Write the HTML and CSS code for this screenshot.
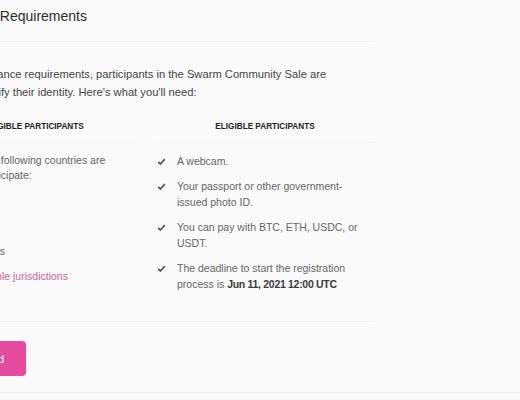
FILE: index.html
```html
<!DOCTYPE html>
<html lang="en">
<head>
<meta charset="utf-8">
<title>Compliance Requirements</title>
<link rel="stylesheet" href="styles.css">
</head>
<body>
<main class="card">
  <header class="card-head">
    <h2 class="title">Compliance Requirements</h2>
  </header>
  <p class="intro">To meet compliance requirements, participants in the Swarm Community Sale are expected to verify their identity. Here's what you'll need:</p>
  <section class="columns">
    <div class="col">
      <h3 class="col-title">Ineligible Participants</h3>
      <div class="col-body">
        <p class="note">Residents of the following countries are forbidden to participate:</p>
        <ul class="countries">
          <li>Cuba</li>
          <li>Iran</li>
          <li>North Korea</li>
          <li>Syria</li>
          <li>United States</li>
        </ul>
        <a class="link" href="#">Full list of ineligible jurisdictions</a>
      </div>
    </div>
    <div class="col">
      <h3 class="col-title">Eligible Participants</h3>
      <ul class="checks col-body">
        <li><svg class="check" viewBox="0 0 12 12"><path d="M1.5 6.5 L4.5 9.3 L10.5 2.8"/></svg><span>A webcam.</span></li>
        <li><svg class="check" viewBox="0 0 12 12"><path d="M1.5 6.5 L4.5 9.3 L10.5 2.8"/></svg><span>Your passport or other government-issued photo ID.</span></li>
        <li><svg class="check" viewBox="0 0 12 12"><path d="M1.5 6.5 L4.5 9.3 L10.5 2.8"/></svg><span>You can pay with BTC, ETH, USDC, or USDT.</span></li>
        <li><svg class="check" viewBox="0 0 12 12"><path d="M1.5 6.5 L4.5 9.3 L10.5 2.8"/></svg><span>The deadline to start the registration process is <strong>Jun 11, 2021 12:00 UTC</strong></span></li>
      </ul>
    </div>
  </section>
  <div class="actions">
    <button class="btn" type="button">Get Verified</button>
  </div>
</main>
<footer class="foot"></footer>
</body>
</html>
```

FILE: styles.css
```css
* { box-sizing: border-box; }
html, body { margin: 0; padding: 0; }
body {
  background: #fafafa;
  font-family: "Liberation Sans", Arial, sans-serif;
  color: #666;
  width: 520px;
  height: 400px;
  overflow: hidden;
}
.card {
  margin-left: -78px;
  width: 451px;
}
.card-head {
  padding: 6px 0 15px;
  border-bottom: 1px solid #efefef;
}
.title {
  margin: 0;
  font-size: 14px;
  line-height: 20px;
  font-weight: 400;
  color: #2c2c2c;
}
.intro {
  margin: 23px 0 0;
  font-size: 11.2px;
  line-height: 18px;
  color: #454545;
  width: 440px;
}
.columns {
  margin-top: 20px;
  display: grid;
  grid-template-columns: 216px 216px;
  column-gap: 19px;
  border-bottom: 1px solid #efefef;
  padding-bottom: 29px;
}
.col-title {
  margin: 0;
  font-size: 8.2px;
  line-height: 12px;
  font-weight: 700;
  text-transform: uppercase;
  color: #222;
  text-align: center;
  padding-bottom: 9px;
  border-bottom: 1px solid #f1f1f1;
}
.col-body { padding-top: 10px; }
.note {
  margin: 0;
  font-size: 10.5px;
  line-height: 15px;
}
.countries {
  list-style: none;
  margin: 0;
  padding: 1px 0 0 20px;
  font-size: 10.5px;
  line-height: 15px;
}
.link {
  display: inline-block;
  margin-top: 10px;
  font-size: 10.5px;
  line-height: 15px;
  color: #d0649f;
  text-decoration: none;
}
.checks {
  list-style: none;
  margin: 0;
  padding-left: 0;
  padding-right: 10px;
}
.checks li {
  display: flex;
  gap: 11px;
  font-size: 10.5px;
  line-height: 16px;
  margin-bottom: 9px;
}
.checks li:last-child { margin-bottom: 0; }
.checks strong {
  color: #3a3a3a;
  font-weight: 700;
  letter-spacing: -0.3px;
}
.check {
  flex: none;
  width: 9px;
  height: 9px;
  margin-top: 4px;
  fill: none;
  stroke: #555;
  stroke-width: 2.2;
}
.actions { padding-top: 19px; }
.btn {
  font-family: inherit;
  font-size: 11.5px;
  color: #fff;
  background: #e64a9c;
  border: 0;
  border-radius: 4px;
  height: 35px;
  width: 104px;
  padding: 0;
}
.foot {
  margin-top: 16px;
  border-top: 1px solid #ececec;
}
```
